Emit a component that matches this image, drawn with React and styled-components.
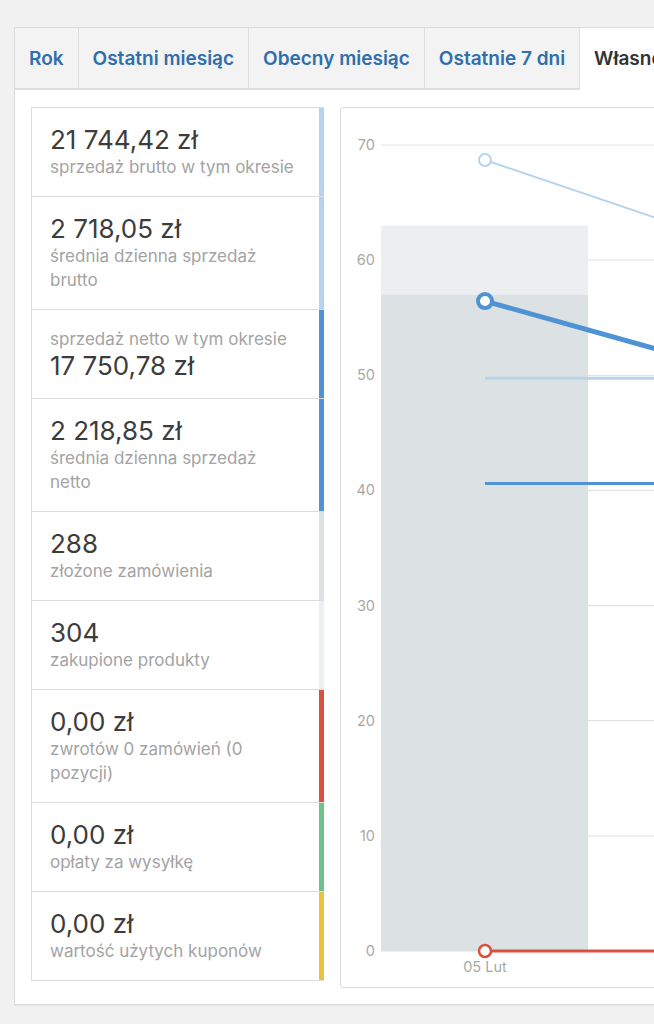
import React from 'react'
import styled, { createGlobalStyle } from 'styled-components';

const GlobalStyle = createGlobalStyle`
  html, body {
    margin: 0;
    padding: 0;
    background: #f1f1f1;
    font-family: Inter, "Noto Sans", sans-serif;
  }
`;

const Page = styled.div`
  width: 654px;
  height: 1024px;
  overflow: hidden;
  padding: 27px 0 0 14px;
  box-sizing: border-box;
`;

const Panel = styled.div`
  width: 900px;
  background: #fff;
  border: 1px solid #dcdcde;
  box-shadow: 0 1px 1px rgba(0, 0, 0, 0.04);
`;

const TabBar = styled.div`
  display: flex;
  height: 62px;
  background: #fff;
`;

const Tab = styled.div`
  display: flex;
  align-items: center;
  padding: 0 14px;
  font-size: 19px;
  font-weight: 600;
  color: ${({ active }) => (active ? '#333' : '#2f6fab')};
  background: ${({ active }) => (active ? '#fff' : '#f3f3f3')};
  border-right: 1px solid #dedede;
  border-bottom: ${({ active }) => (active ? '2px solid transparent' : '2px solid #dcdcdc')};
  white-space: nowrap;
  &:last-child {
    border-right: none;
  }
`;

const Body = styled.div`
  display: flex;
  align-items: flex-start;
  gap: 16px;
  padding: 17px 17px 16px 16px;
`;

const Legend = styled.ul`
  list-style: none;
  margin: 0;
  padding: 0;
  width: 292px;
  flex: none;
  border: 1px solid #dcdcdc;
  border-right: none;
  border-bottom: none;
  background: #fff;
`;

const Item = styled.li`
  display: flex;
  flex-direction: ${({ reverse }) => (reverse ? 'column-reverse' : 'column')};
  padding: 17px 24px 17px 18px;
  border-bottom: 1px solid #dcdcdc;
  box-shadow: inset -5px 0 0 ${({ color }) => color};
`;

const Amount = styled.span`
  font-size: 26px;
  line-height: 30px;
  color: #3c3c3c;
`;

const Label = styled.span`
  font-size: 17px;
  line-height: 24px;
  color: #a3a3a3;
`;

const ChartBox = styled.div`
  width: 520px;
  height: 879px;
  flex: none;
  border: 1px solid #dcdcdc;
  border-radius: 3px;
  background: #fff;
`;

const AxisText = styled.text`
  font-family: Inter, "Noto Sans", sans-serif;
  font-size: 14.5px;
  fill: #a8a8a8;
`;

const tabs = ['Rok', 'Ostatni miesiąc', 'Obecny miesiąc', 'Ostatnie 7 dni', 'Własne'];

const legend = [
  { amount: '21 744,42 zł', label: 'sprzedaż brutto w tym okresie', color: '#b5d3ec' },
  { amount: '2 718,05 zł', label: 'średnia dzienna sprzedaż brutto', color: '#b5d3ec' },
  { amount: '17 750,78 zł', label: 'sprzedaż netto w tym okresie', color: '#4f93d4', reverse: true },
  { amount: '2 218,85 zł', label: 'średnia dzienna sprzedaż netto', color: '#4f93d4' },
  { amount: '288', label: 'złożone zamówienia', color: '#dce1e4' },
  { amount: '304', label: 'zakupione produkty', color: '#edf0f1' },
  { amount: '0,00 zł', label: 'zwrotów 0 zamówień (0 pozycji)', color: '#d9513f' },
  { amount: '0,00 zł', label: 'opłaty za wysyłkę', color: '#6ec28c' },
  { amount: '0,00 zł', label: 'wartość użytych kuponów', color: '#ecc23c' },
];

// chart coordinates are measured on the page, shifted into the box
const OX = 342;
const OY = 108;
const UNIT = 11.514;
const ZERO = 951;
const px = (x) => x - OX;
const py = (v) => ZERO - v * UNIT - OY;

const Chart = () => {
  const ticks = [0, 10, 20, 30, 40, 50, 60, 70];
  const p0 = 486;
  const p1 = 786;
  return (
    <svg width="520" height="879">
      {ticks.map((t) => (
        <g key={t}>
          <line x1={px(382)} x2={520} y1={py(t)} y2={py(t)} stroke="#e2e5e6" strokeWidth="1.2" />
          <AxisText x={px(376)} y={py(t) + 5} textAnchor="end">{t}</AxisText>
        </g>
      ))}
      <rect x={px(382)} width={207} y={py(63)} height={63 * UNIT} fill="#ebeff0" />
      <rect x={px(382)} width={207} y={py(57)} height={57 * UNIT} fill="#dce1e4" />

      <line x1={px(p0)} x2={520} y1={py(49.75)} y2={py(49.75)} stroke="#b5d3ec" strokeWidth="3" />
      <line x1={px(p0)} x2={520} y1={py(40.6)} y2={py(40.6)} stroke="#4f93d4" strokeWidth="3" />

      <line x1={px(p0)} y1={py(68.7)} x2={px(p1)} y2={py(68.7) + 101.7} stroke="#b5d3ec" strokeWidth="2" />
      <circle cx={px(p0)} cy={py(68.7)} r="6" fill="#fff" stroke="#b5d3ec" strokeWidth="2" />

      <line x1={px(p0)} y1={py(56.45)} x2={px(p1)} y2={py(56.45) + 84} stroke="#4f93d4" strokeWidth="5" />
      <circle cx={px(p0)} cy={py(56.45)} r="7" fill="#fff" stroke="#4f93d4" strokeWidth="4" />

      <line x1={px(p0)} x2={520} y1={py(0)} y2={py(0)} stroke="#d9513f" strokeWidth="3" />
      <circle cx={px(p0)} cy={py(0)} r="6" fill="#fff" stroke="#d9513f" strokeWidth="2.5" />

      <AxisText x={px(p0)} y={py(0) + 21} textAnchor="middle">05 Lut</AxisText>
    </svg>
  );
};

export default function App() {
  return (
    <Page>
      <GlobalStyle />
      <Panel>
        <TabBar>
          {tabs.map((t) => (
            <Tab key={t} active={t === 'Własne'}>{t}</Tab>
          ))}
        </TabBar>
        <Body>
          <Legend>
            {legend.map((l, i) => (
              <Item key={i} color={l.color} reverse={l.reverse}>
                <Amount>{l.amount}</Amount>
                <Label>{l.label}</Label>
              </Item>
            ))}
          </Legend>
          <ChartBox>
            <Chart />
          </ChartBox>
        </Body>
      </Panel>
    </Page>
  );
}
